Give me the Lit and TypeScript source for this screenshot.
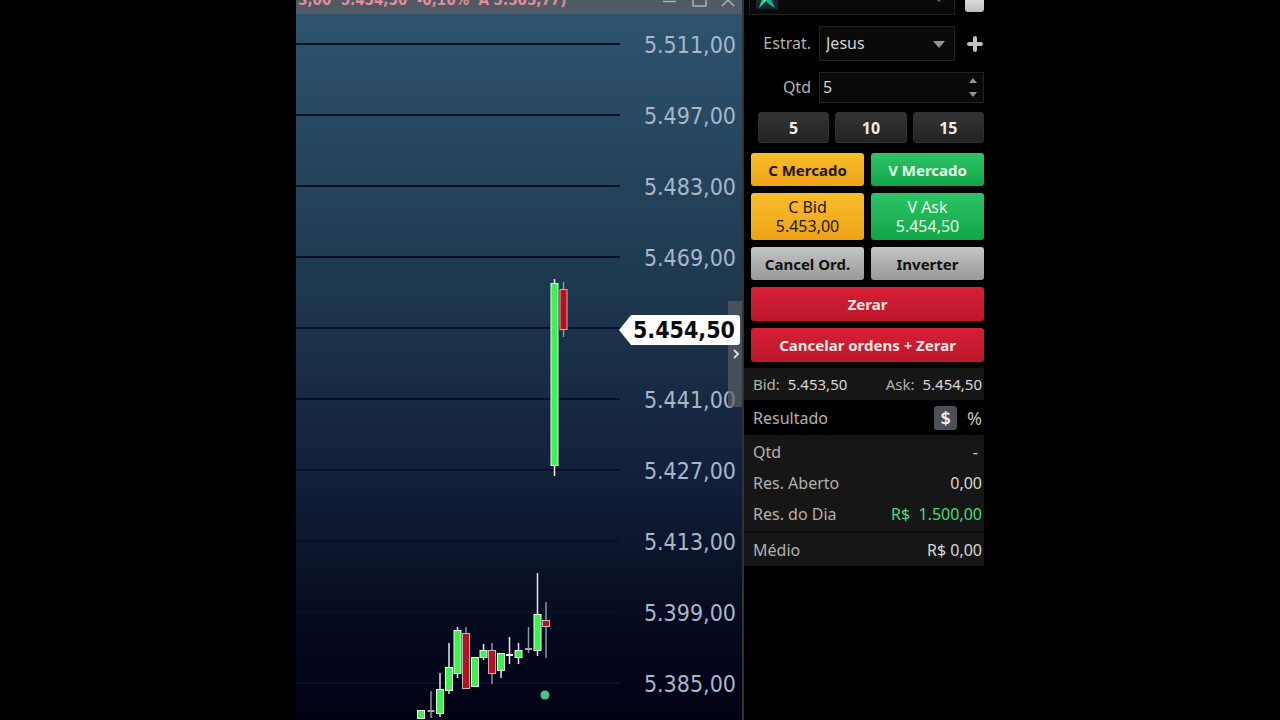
import { LitElement, html, svg, css } from "lit";
import { customElement, property, state } from "lit/decorators.js";

type Kind = "up" | "down" | "flat" | "flat-dim";

interface Candle {
  x: number;
  high: number;
  low: number;
  top: number;
  bottom: number;
  kind: Kind;
}

const candle = (x: number, high: number, top: number, bottom: number, low: number, kind: Kind): Candle =>
  ({ x, high, top, bottom, low, kind });

const CANDLES: Candle[] = [
  candle(125, 710, 710, 719, 719, "up"),
  candle(135, 691, 710, 712, 718, "flat-dim"),
  candle(144, 673, 689, 714, 717, "up"),
  candle(153, 643, 667, 691, 694, "up"),
  candle(161.5, 627, 630, 674, 678, "up"),
  candle(170, 627, 633, 689, 689, "down"),
  candle(179, 657, 657, 687, 687, "up"),
  candle(187.5, 644, 650, 658, 660, "up"),
  candle(196, 643, 650, 674, 684, "down"),
  candle(205, 653, 653, 671, 678, "up"),
  candle(213.5, 637, 654, 656, 664, "flat"),
  candle(222.5, 643, 650, 658, 664, "up"),
  candle(232.5, 627, 648, 650, 653, "flat-dim"),
  candle(241.5, 573, 614, 651, 656, "up"),
  candle(250, 602, 620, 627, 658, "down"),
  candle(258.5, 279, 283, 466, 476, "up"),
  candle(267.5, 282, 289, 330, 337, "down"),
];

const PRICES = ["5.511,00", "5.497,00", "5.483,00", "5.469,00", "", "5.441,00", "5.427,00", "5.413,00", "5.399,00", "5.385,00"];

@customElement("price-chart")
export class PriceChart extends LitElement {
  @property() last = "5.454,50";

  static styles = css`
    :host { display: flex; flex-direction: column; position: relative; overflow: hidden; box-sizing: border-box;
      border-right: 2px solid #303234; font-family: "DejaVu Sans Condensed", "DejaVu Sans", sans-serif;
      background: linear-gradient(#2d546f 0, #2b4f6a 60px, #1e394f 280px, #121f3a 480px, #0a1226 570px, #03061c 650px, #010014 720px); }
    .title { flex: none; height: 14px; box-sizing: border-box; padding: 0 6px 4px 2px; display: flex; align-items: flex-end;
      justify-content: space-between; background: #4e5a64; overflow: hidden; }
    .quote { font-size: 15px; line-height: 20px; font-weight: 700; color: #e88a9a; white-space: pre; }
    .controls { display: flex; gap: 13px; }
    .control { all: unset; width: 16px; height: 16px; }
    .control svg { display: block; }
    .row { flex: none; height: 71px; display: grid; grid-template-columns: 1fr 122px; line-height: 62px; }
    .line { height: 1px; margin-top: 30px; background: #070f20; border-bottom: 1px solid #0a183044; }
    .price { text-align: right; padding-right: 6px; font-size: 23px; color: #a9b7c8; }
    .tag { position: relative; z-index: 2; justify-self: end; margin: 17px 2px 0 0; width: 121px; height: 30px; box-sizing: border-box;
      padding-right: 5px; text-align: right; line-height: 30px; font-size: 23px; font-weight: 700; color: #0b0b0b; background: #fff;
      border-radius: 3px; clip-path: polygon(0 50%, 10% 0, 100% 0, 100% 100%, 10% 100%); }
    .row .line { margin-top: 29px; }
    .candles { position: absolute; left: 0; top: 0; }
    .up { fill: #3df24c; stroke: #e9fbe9; }
    .down { fill: #b90f22; stroke: #c9b3ba; }
    .flat { fill: #f2f4f6; }
    .flat-dim { fill: #a5aab4; }
    .wick { stroke: #e4e8ec; stroke-width: 1.5; }
    .wick.dim { stroke: #8f949f; }
    .handle { all: unset; position: absolute; z-index: 1; right: 0; top: 301px; width: 14px; height: 106px;
      background: #5b6064aa; display: grid; place-items: center; }
  `;

  private drawCandle(c: Candle) {
    const flat = c.kind.startsWith("flat");
    const dim = c.kind === "flat-dim" || c.kind === "down";
    return svg`
      <line class="wick ${dim ? "dim" : ""}" x1=${c.x} x2=${c.x} y1=${c.high} y2=${c.low}></line>
      <rect class=${c.kind} x=${c.x - 3.5} y=${c.top + (flat ? 0 : 0.5)} width="7" height=${c.bottom - c.top - (flat ? 0 : 1)}></rect>`;
  }

  render() {
    return html`
      <div class="title">
        <span class="quote">3,00  5.454,50  -0,16%  A 5.505,77)</span>
        <span class="controls">
          <button class="control" aria-label="Minimizar"><svg width="16" height="16" fill="none" stroke="#aab2b8" stroke-width="1.5"><path d="M1 7.5h13"/></svg></button>
          <button class="control" aria-label="Maximizar"><svg width="16" height="16" fill="none" stroke="#aab2b8" stroke-width="1.5"><path d="M2 -1h13v13H2z"/></svg></button>
          <button class="control" aria-label="Fechar"><svg width="16" height="16" fill="none" stroke="#aab2b8" stroke-width="1.5"><path d="M2 0l12 12M14 0L2 12"/></svg></button>
        </span>
      </div>
      ${PRICES.map((p) => html`
        <div class="row"><span class="line"></span>${p
          ? html`<span class="price">${p}</span>`
          : html`<span class="tag">${this.last}</span>`}</div>`)}
      <svg class="candles" width="446" height="720" aria-hidden="true">
        ${CANDLES.map((c) => this.drawCandle(c))}
        <circle cx="249" cy="695" r="4.5" fill="#4cc488"></circle>
      </svg>
      <button class="handle" aria-label="Expandir"><svg width="10" height="12" fill="none" stroke="#d5d9dc" stroke-width="2"><path d="M4 2l4 4-4 4"/></svg></button>
    `;
  }
}

@customElement("order-panel")
export class OrderPanel extends LitElement {
  @state() private qty = 5;

  static styles = css`
    :host { display: block; background: #000; color: #b5b1ac; font-size: 16px; line-height: 22px; }
    button, input, select { font: inherit; color: inherit; margin: 0; box-sizing: border-box; }
    button { border: 0; padding: 0; background: none; }
    button svg { display: block; }
    .field { display: flex; align-items: center; }
    .account { height: 15px; padding-left: 5px; overflow: hidden; align-items: flex-end; }
    .strategy { margin-top: 11px; height: 35px; }
    .quantity { margin-top: 11px; height: 31px; }
    .field label { width: 67px; margin-right: 8px; padding-bottom: 2px; text-align: right; }
    .box { position: relative; display: flex; flex: 1; height: 100%; box-sizing: border-box; border: 1px solid #232323; background: #0a0a0a; color: #d4d2cd; }
    .account .box { height: 35px; }
    .box select, .box input { appearance: none; width: 100%; height: 100%; border: 0; border-radius: 0; background: none; padding: 0 6px 2px; outline: 0; }
    .box input { padding: 0 3px 2px; }
    .chevron { position: absolute; right: 9px; top: 14px; pointer-events: none; }
    .logo { position: absolute; left: 6px; bottom: 5px; }
    .side { width: 29px; display: flex; justify-content: flex-end; }
    .square { width: 19px; height: 20px; margin-bottom: 3px; border-radius: 3px; background: linear-gradient(#eee, #bdbdbd); }
    .spin { display: flex; flex-direction: column; width: 24px; justify-content: center; gap: 4px; }
    .spin button { height: 10px; display: grid; place-items: center; }
    .presets { display: grid; grid-template-columns: repeat(3, 1fr); gap: 6px; margin: 9px 0 10px 14px; }
    .presets button { height: 31px; border-radius: 3px; border: 1px solid #303030; background: linear-gradient(#343434, #232323); color: #f1eee6; font-weight: 700; }
    .actions { display: grid; grid-template-columns: 1fr 1fr; gap: 7px; margin: 0 0 6px 7px; }
    .actions button { height: 33px; border-radius: 3px; font-size: 15px; font-weight: 700; }
    .actions .tall { height: 47px; font-size: 16px; font-weight: 400; line-height: 19px; }
    .actions .wide { grid-column: 1 / -1; height: 34px; }
    .buy { background: linear-gradient(#f9bd2b, #eda219); color: #21170a; }
    .sell { background: linear-gradient(#2dc467, #10a648); color: #e5ffe9; }
    .plain { background: linear-gradient(#c4c4c4, #999); color: #111; }
    .stop { background: linear-gradient(#d61f35, #be182b); color: #ffe9e4; }
    .bar { display: flex; justify-content: space-between; align-items: center; padding: 0 2px 0 9px; }
    .quotes { height: 32px; font-size: 15px; background: #161616; }
    .quotes b, .value { font-weight: 400; color: #dad8d4; }
    .quotes b { margin-left: 4px; }
    .result { height: 35px; }
    .units { display: flex; align-items: center; gap: 10px; }
    .units button { height: 24px; color: #c4c2bf; font-size: 18px; }
    .units .on { width: 23px; border-radius: 3px; background: #4b5056; color: #f0f0f0; font-weight: 600; }
    .list { background: #161616; padding-top: 1px; }
    .list .bar { height: 31px; }
    .list .average { margin-top: 2px; height: 33px; border-top: 2px solid #090909; }
    .list .dash { padding-right: 4px; }
    .gain { color: #52d67b; white-space: pre; }
  `;

  render() {
    return html`
      <div class="field account">
        <div class="box">
          <svg class="logo" width="22" height="24"><rect width="22" height="24" fill="#1b2535"/><path d="M11 6l8 17-5-3-4-4-7 7 3-10z" fill="#14b67c"/><path d="M3 22l6-9 2 2z" fill="#44e0a4"/></svg>
          <select aria-label="Conta"><option></option></select>
          <svg class="chevron" width="12" height="7"><path d="M0 0h12L6 7z" fill="#77736f"/></svg>
        </div>
        <div class="side"><button class="square" aria-label="Conta ativa"></button></div>
      </div>
      <div class="field strategy">
        <label for="strategy">Estrat.</label>
        <div class="box">
          <select id="strategy"><option>Jesus</option></select>
          <svg class="chevron" width="12" height="7"><path d="M0 0h12L6 7z" fill="#96938f"/></svg>
        </div>
        <div class="side"><button aria-label="Adicionar"><svg width="18" height="18" stroke="#c2c0be" stroke-width="4" stroke-linecap="round"><path d="M9 3v12M3 9h12"/></svg></button></div>
      </div>
      <div class="field quantity">
        <label for="qty">Qtd</label>
        <div class="box">
          <input id="qty" inputmode="numeric" .value=${String(this.qty)}>
          <div class="spin">
            <button aria-label="Aumentar" @click=${() => this.qty++}><svg width="8" height="5"><path d="M0 5h8L4 0z" fill="#96938f"/></svg></button>
            <button aria-label="Diminuir" @click=${() => this.qty--}><svg width="8" height="5"><path d="M0 0h8L4 5z" fill="#96938f"/></svg></button>
          </div>
        </div>
      </div>
      <div class="presets">
        ${[5, 10, 15].map((n) => html`<button @click=${() => (this.qty = n)}>${n}</button>`)}
      </div>
      <div class="actions">
        <button class="buy">C Mercado</button>
        <button class="sell">V Mercado</button>
        <button class="buy tall">C Bid<br>5.453,00</button>
        <button class="sell tall">V Ask<br>5.454,50</button>
        <button class="plain">Cancel Ord.</button>
        <button class="plain">Inverter</button>
        <button class="stop wide">Zerar</button>
        <button class="stop wide">Cancelar ordens + Zerar</button>
      </div>
      <div class="bar quotes">
        <span>Bid: <b>5.453,50</b></span>
        <span>Ask: <b>5.454,50</b></span>
      </div>
      <div class="bar result">
        <span>Resultado</span>
        <span class="units"><button class="on">$</button><button>%</button></span>
      </div>
      <div class="list">
        <div class="bar"><span>Qtd</span><span class="value dash">-</span></div>
        <div class="bar"><span>Res. Aberto</span><span class="value">0,00</span></div>
        <div class="bar"><span>Res. do Dia</span><span class="gain">R$  1.500,00</span></div>
        <div class="bar average"><span>Médio</span><span class="value">R$ 0,00</span></div>
      </div>
    `;
  }
}

@customElement("app-root")
export class AppRoot extends LitElement {
  static styles = css`
    :host { display: grid; grid-template-columns: 448px 240px; justify-content: center; height: 100vh; overflow: hidden;
      background: #000; font-family: "Noto Sans", "Open Sans", sans-serif; }
    price-chart, order-panel { min-height: 0; }
  `;

  render() {
    return html`<price-chart></price-chart><order-panel></order-panel>`;
  }
}
